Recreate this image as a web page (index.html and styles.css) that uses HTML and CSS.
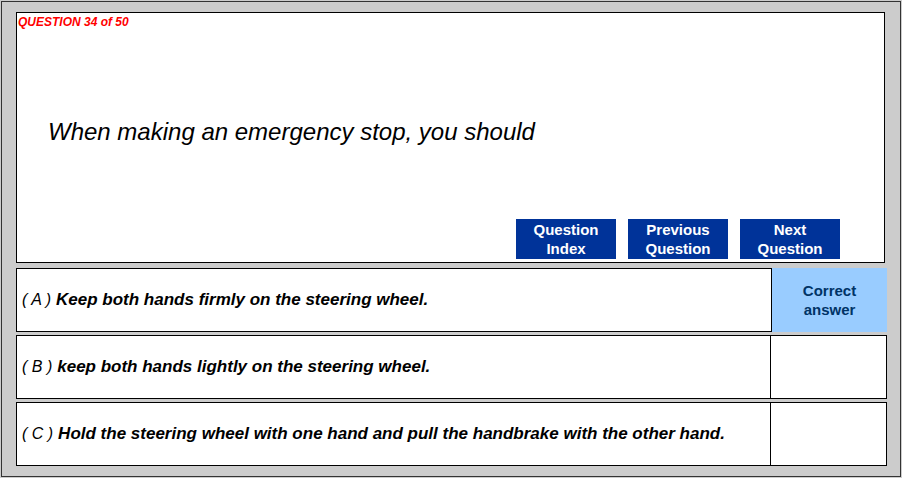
FILE: index.html
```html
<!DOCTYPE html>
<html lang="en">
<head>
<meta charset="UTF-8" />
<meta name="viewport" content="width=device-width, initial-scale=1.0">
<title>Question 34</title>
<link rel="stylesheet" href="styles.css">
</head>
<body>
  <main class="frame">
    <!-- question panel -->
    <section class="question">
      <p class="counter">QUESTION 34 of 50</p>
      <h1 class="prompt">When making an emergency stop, you should</h1>
      <nav class="buttons">
        <button class="navbtn">Question<br>Index</button>
        <button class="navbtn">Previous<br>Question</button>
        <button class="navbtn">Next<br>Question</button>
      </nav>
    </section>

    <!-- answers -->
    <section class="answer">
      <div class="text"><span class="letter">( A )</span> Keep both hands firmly on the steering wheel.</div>
      <div class="mark correct">Correct<br>answer</div>
    </section>
    <section class="answer">
      <div class="text"><span class="letter">( B )</span> keep both hands lightly on the steering wheel.</div>
      <div class="mark"></div>
    </section>
    <section class="answer">
      <div class="text"><span class="letter">( C )</span> Hold the steering wheel with one hand and pull the handbrake with the other hand.</div>
      <div class="mark"></div>
    </section>
  </main>
</body>
</html>
```

FILE: styles.css
```css
/* page */
body
{
  margin: 0;
  background: #cccccc;
  font-family: "Liberation Sans", Arial, sans-serif;
}
/* outer frame */
.frame
{
  box-sizing: border-box;
  width: 900px;
  height: 476px;
  margin: 1px 0 0 1px;
  border: 1px solid #333333;
  background: #cccccc;
  padding: 10px 0 0 14px;
  display: flex;
  flex-direction: column;
  gap: 3px;
}
/* question box */
.question
{
  box-sizing: border-box;
  width: 869px;
  height: 251px;
  margin-bottom: 2px;
  border: 1px solid #000;
  background: #fff;
  display: flex;
  flex-direction: column;
}
.counter
{
  margin: 0;
  padding: 2px 0 0 1px;
  color: #ff0000;
  font-size: 12px;
  font-weight: bold;
  font-style: italic;
  line-height: 14px;
}
.prompt
{
  margin: 89px 0 0 31px;
  font-size: 24px;
  font-weight: normal;
  font-style: italic;
  line-height: 28px;
}
.buttons
{
  margin-top: auto;
  margin-bottom: 3px;
  margin-right: 44px;
  align-self: flex-end;
  display: flex;
  gap: 12px;
}
.navbtn
{
  width: 100px;
  height: 40px;
  padding: 0;
  border: none;
  background: #003399;
  color: #fff;
  font-family: "Liberation Sans", Arial, sans-serif;
  font-size: 15px;
  font-weight: bold;
  line-height: 19px;
}
/* answer rows */
.answer
{
  box-sizing: border-box;
  width: 871px;
  height: 64px;
  border: 1px solid #000;
  background: #fff;
  display: flex;
}
.text
{
  flex: 1;
  display: flex;
  align-items: center;
  gap: 5px;
  padding-left: 5px;
  font-size: 17px;
  font-weight: bold;
  font-style: italic;
}
.letter
{
  font-size: 16px;
  font-weight: normal;
}
.mark
{
  width: 115px;
  border-left: 1px solid #000;
  display: flex;
  align-items: center;
  justify-content: center;
  text-align: center;
  font-size: 15px;
  font-weight: bold;
  line-height: 19px;
  color: #003366;
}
.correct
{
  background: #99ccff;
  margin: -1px -1px -1px 0;
}
```
